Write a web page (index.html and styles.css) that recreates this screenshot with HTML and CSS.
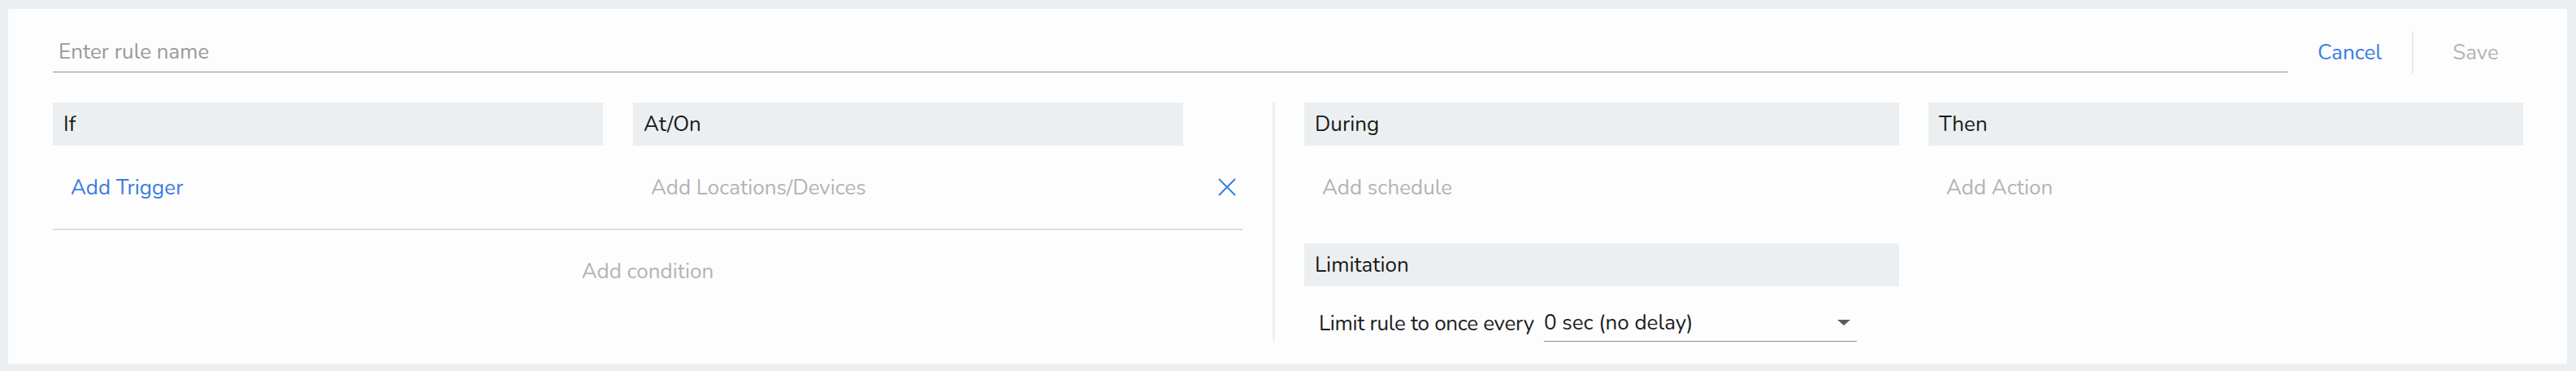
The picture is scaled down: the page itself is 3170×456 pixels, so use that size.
FILE: index.html
```html
<!DOCTYPE html>
<html lang="en">
<head>
<meta charset="utf-8">
<title>Rule editor</title>
<link rel="stylesheet" href="styles.css">
</head>
<body>
<div class="card">
  <div class="header-row">
    <input class="rule-name" type="text" placeholder="Enter rule name">
    <button class="btn btn-cancel" type="button">Cancel</button>
    <span class="btn-sep"></span>
    <button class="btn btn-save" type="button">Save</button>
  </div>
  <div class="main">
    <div class="left">
      <div class="left-top">
        <div class="col col-if">
          <div class="bar">If</div>
          <div class="cell-body"><span class="link">Add Trigger</span></div>
        </div>
        <div class="col col-at">
          <div class="bar bar-at">At/On</div>
          <div class="cell-body cell-at">
            <span class="muted">Add Locations/Devices</span>
            <svg class="close-icon" width="22" height="22" viewBox="0 0 22 22" aria-hidden="true">
              <path d="M1 1 L21 21 M21 1 L1 21" stroke="#3b7ddd" stroke-width="2" fill="none"/>
            </svg>
          </div>
        </div>
      </div>
      <div class="condition"><span class="muted">Add condition</span></div>
    </div>
    <div class="vsep"></div>
    <div class="right">
      <div class="col">
        <div class="bar">During</div>
        <div class="cell-body"><span class="muted">Add schedule</span></div>
        <div class="bar bar-limit">Limitation</div>
        <div class="limit-row">
          <span class="limit-label">Limit rule to once every</span>
          <div class="select">
            <span>0 sec (no delay)</span>
            <span class="caret"></span>
          </div>
        </div>
      </div>
      <div class="col">
        <div class="bar">Then</div>
        <div class="cell-body"><span class="muted">Add Action</span></div>
      </div>
    </div>
  </div>
</div>
</body>
</html>
```

FILE: styles.css
```css
* {
  box-sizing: border-box;
}

html, body {
  margin: 0;
}

body {
  background: #eceff1;
  padding: 11px 11px 9px 10px;
  font-family: "Nunito", Lato, "Open Sans", sans-serif;
  font-size: 26px;
  color: #1c1c1c;
}

.card {
  background: #fdfdfe;
  height: 436px;
  padding: 28px 36px 28px 55px;
}

.header-row {
  display: flex;
  align-items: flex-start;
  height: 51px;
}

.rule-name {
  flex: 1;
  min-width: 0;
  height: 50px;
  border: none;
  border-bottom: 1px solid #8f9092;
  background: transparent;
  padding: 0 0 0 7px;
  margin: 0;
  font: inherit;
  color: #1c1c1c;
  outline: none;
}

.rule-name::placeholder {
  color: #999a9c;
}

.btn {
  width: 153px;
  height: 51px;
  border: none;
  background: transparent;
  padding: 0;
  margin: 0;
  font: inherit;
  cursor: pointer;
}

.btn-cancel {
  color: #3b7ddd;
}

.btn-save {
  color: #b2b4b8;
}

.btn-sep {
  width: 2px;
  height: 51px;
  background: #e7e9ec;
}

.main {
  display: flex;
  height: 293px;
  margin-top: 36px;
  margin-right: 18px;
}

.left {
  width: 1464px;
  flex: none;
}

.left-top {
  display: flex;
  gap: 37px;
  border-bottom: 2px solid #dcdde0;
}

.col-if {
  width: 677px;
  flex: none;
}

.col-at {
  flex: 1;
}

.bar {
  height: 53px;
  background: #eceff1;
  padding-left: 13px;
  display: flex;
  align-items: center;
  color: #1a1a1a;
}

.bar-at {
  width: 677px;
}

.cell-body {
  height: 102px;
  display: flex;
  align-items: center;
  padding-left: 22px;
}

.cell-at {
  justify-content: space-between;
  padding-right: 8px;
}

.close-icon {
  display: block;
}

.link {
  color: #3b7ddd;
}

.muted {
  color: #b2b4b8;
}

.condition {
  height: 100px;
  display: flex;
  align-items: center;
  justify-content: center;
}

.vsep {
  width: 3px;
  flex: none;
  background: #eceff1;
  margin: 0 36px 0 37px;
}

.right {
  flex: 1;
  display: grid;
  grid-template-columns: 1fr 1fr;
  column-gap: 36px;
  align-items: start;
}

.bar-limit {
  margin-top: 18px;
}

.limit-row {
  display: flex;
  align-items: center;
  margin-top: 22px;
  padding-left: 18px;
  color: #1e1e1e;
}

.limit-label {
  letter-spacing: -0.3px;
}

.select {
  width: 385px;
  height: 46px;
  margin-left: 12px;
  border-bottom: 1px solid #8f9092;
  display: flex;
  align-items: center;
  justify-content: space-between;
  padding-right: 8px;
}

.caret {
  width: 0;
  height: 0;
  border-left: 8px solid transparent;
  border-right: 8px solid transparent;
  border-top: 7px solid #5a5c60;
}
```
